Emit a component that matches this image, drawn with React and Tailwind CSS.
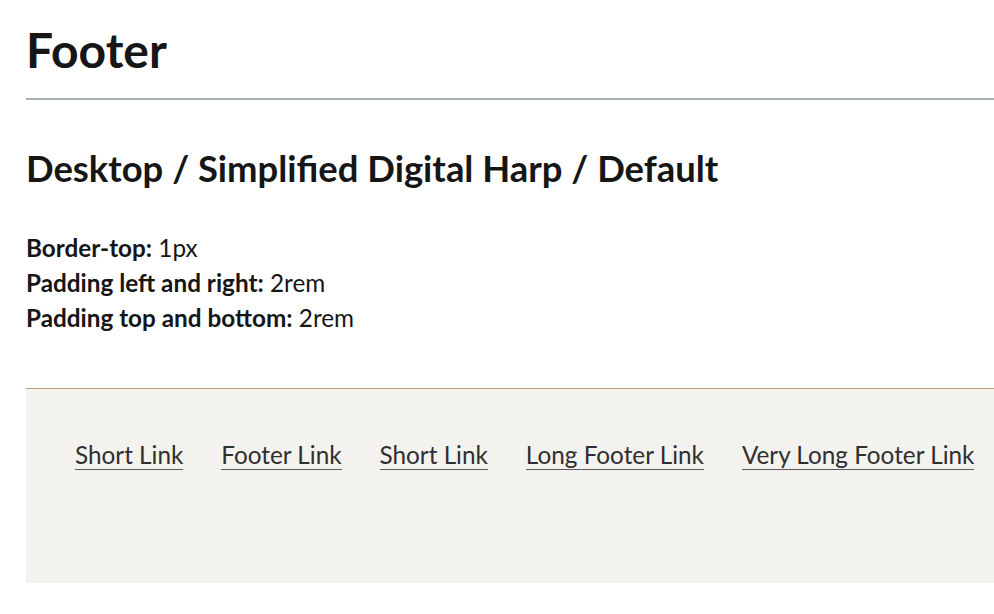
const links = ["Short Link", "Footer Link", "Short Link", "Long Footer Link", "Very Long Footer Link"];

const specs = [
  { label: "Border-top:", value: "1px" },
  { label: "Padding left and right:", value: "2rem" },
  { label: "Padding top and bottom:", value: "2rem" },
];

export default function App() {
  return (
    <div className="min-h-screen bg-white pl-[26px] font-['Lato','Liberation_Sans',sans-serif] text-[#161616]">
      <div className="pt-[21px] pb-[19px] border-b-2 border-[#a9afb1]">
        <h1 className="text-[48px] font-bold leading-[1.2]">Footer</h1>
      </div>

      <h2 className="mt-[47px] text-[36.4px] font-bold leading-[1.2]">
        Desktop / Simplified Digital Harp / Default
      </h2>

      <div className="mt-[40px] text-[24.3px] leading-[35px]">
        {specs.map((s) => (
          <p key={s.label}>
            <span className="font-bold">{s.label}</span> {s.value}
          </p>
        ))}
      </div>

      <footer className="mt-[53px] h-[195px] border-t border-[#b89f7c] bg-[#f4f2ee] pl-[49px] pt-[51px]">
        <ul className="flex gap-[38px] whitespace-nowrap">
          {links.map((l, i) => (
            <li key={i} className="text-[24.3px] leading-[1.2] text-[#2f2f2f]">
              <a href="#" className="border-b-[1.5px] border-[#5a5a5a]">
                {l}
              </a>
            </li>
          ))}
        </ul>
      </footer>
    </div>
  );
}
